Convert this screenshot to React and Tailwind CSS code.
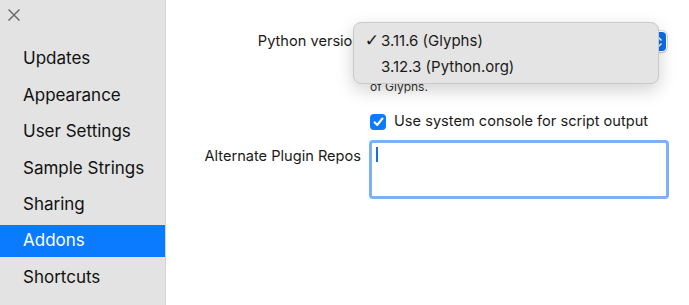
import React from 'react';

const items = ['Updates', 'Appearance', 'User Settings', 'Sample Strings', 'Sharing', 'Addons', 'Shortcuts'];

const Sidebar = () => (
    <div className="w-[166px] h-[305px] bg-[#e3e3e3] border-r border-[#d2d2d2] flex flex-col shrink-0">
        <div className="h-[41px] pl-[8px] pt-[9px]">
            <svg width="12" height="12" viewBox="0 0 12 12" className="block">
                <path d="M0.5 0.5 L11.5 11.5 M11.5 0.5 L0.5 11.5" stroke="#6b6b6b" strokeWidth="1.5" />
            </svg>
        </div>
        {items.map(name => (
            <div key={name} className="h-[36.4px] flex items-center">
                <div className={`w-full h-[32px] flex items-center pl-[23px] text-[17px] ${name === 'Addons' ? 'bg-[#0a7aff] text-white' : 'text-[#111]'}`}>
                    {name}
                </div>
            </div>
        ))}
    </div>
);

const App = () => {
    return (
        <div className="w-[689px] h-[305px] flex bg-white overflow-hidden text-[#1a1a1a]" style={{ fontFamily: 'Inter, "Noto Sans", sans-serif' }}>
            <Sidebar />
            <div className="flex-1 relative">
                <div className="grid grid-cols-[195px_300px] gap-x-[8px] pt-[31px]">
                    {/* Python version row */}
                    <div className="text-[14.6px] text-right h-[20px] leading-[20px]">Python version</div>
                    <div>
                        <div className="h-[21px] w-[298px] rounded-[5px] bg-white shadow-[0_0_0_1px_rgba(0,0,0,0.12),0_1px_2px_rgba(0,0,0,0.15)] flex justify-end items-center">
                            <div className="w-[14px] h-[19px] mr-[1px] rounded-[4px] bg-[#0a6fe8] flex items-center justify-center">
                                <svg width="8" height="12" viewBox="0 0 8 12">
                                    <path d="M1.5 4.5 L4 2 L6.5 4.5 M1.5 7.5 L4 10 L6.5 7.5" stroke="white" strokeWidth="1.4" fill="none" />
                                </svg>
                            </div>
                        </div>
                        <div className="mt-[28px] text-[12px] leading-[14px] text-[#333] pl-[1px]">
                            of Glyphs.
                        </div>
                    </div>

                    {/* console row */}
                    <div />
                    <div className="mt-[20px] flex items-center gap-[8px] h-[16px]">
                        <div className="w-[16px] h-[16px] ml-[1px] rounded-[4px] bg-[#0a7aff] flex items-center justify-center">
                            <svg width="11" height="10" viewBox="0 0 11 10">
                                <path d="M1.5 5.2 L4.2 8 L9.5 1.5" stroke="white" strokeWidth="2" fill="none" strokeLinecap="round" strokeLinejoin="round" />
                            </svg>
                        </div>
                        <span className="text-[14.6px]">Use system console for script output</span>
                    </div>

                    {/* plugin repos */}
                    <div className="mt-[10px] text-[14.6px] text-right pt-[6px]">Alternate Plugin Repos</div>
                    <div className="mt-[10px] w-[300px] h-[59px] rounded-[4px] border-[3px] border-[#7eb0f4] bg-white relative">
                        <div className="absolute left-[4px] top-[4px] w-[2px] h-[15px] bg-[#1a6fe0]" />
                    </div>
                </div>

                {/* Open popup menu */}
                <div className="absolute left-[187px] top-[22px] w-[306px] h-[62px] rounded-[8px] bg-[#e4e4e4] border border-[#c9c9c9] shadow-[0_6px_18px_rgba(0,0,0,0.18)] pt-[5px] text-[15px]">
                    <div className="h-[26px] flex items-center">
                        <span className="w-[27px] text-right pr-[2px] text-[17px]" style={{ fontFamily: '"DejaVu Sans", sans-serif' }}>✓</span>
                        <span>3.11.6 (Glyphs)</span>
                    </div>
                    <div className="h-[26px] flex items-center">
                        <span className="w-[27px]" />
                        <span>3.12.3 (Python.org)</span>
                    </div>
                </div>
            </div>
        </div>
    );
};

export default App;
